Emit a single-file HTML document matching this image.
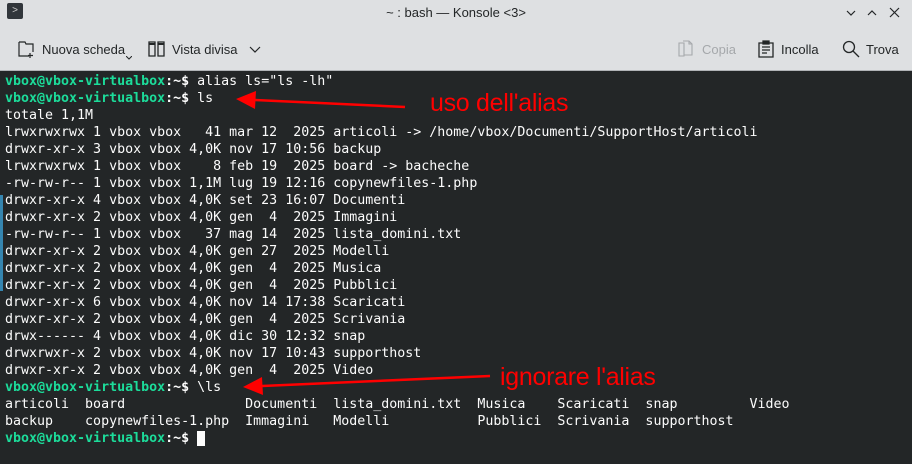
<!DOCTYPE html>
<html><head><meta charset="utf-8"><style>
*{margin:0;padding:0;box-sizing:border-box}
body{width:912px;height:464px;overflow:hidden;background:#232627;font-family:"Liberation Sans",sans-serif}
#title{position:absolute;left:0;top:0;width:912px;height:26px;background:#dee0e2;font-size:13px;color:#232627}
#tool{position:absolute;left:0;top:26px;width:912px;height:45px;background:#dee0e2;border-bottom:1px solid #b0b3b6;font-size:13px;color:#232627}
.ti{position:absolute;top:16px}
#term{position:absolute;left:0;top:72px;width:912px;height:392px;background:#232627}
pre{position:absolute;left:5px;top:1px;font-family:"DejaVu Sans Mono",monospace;font-size:13.3px;line-height:17px;color:#fcfcfc}
.g{color:#1cdc9a;font-weight:bold}
.b{color:#fcfcfc;font-weight:bold}
.ann{position:absolute;color:#f00;font-size:25px;font-family:"Liberation Sans",sans-serif;letter-spacing:-0.3px}
</style></head><body>
<div id="title">
<div style="position:absolute;left:7px;top:3px;width:16px;height:16px;background:#31363b;border-radius:2px;color:#ccc;font-size:10px;line-height:16px;text-align:center">&gt;</div>
<div style="position:absolute;left:0;width:912px;top:5px;text-align:center">~ : bash — Konsole &lt;3&gt;</div>
<svg style="position:absolute;left:840px;top:5px" width="70" height="16" fill="none" stroke="#232627" stroke-width="1.2"><path d="M7 6l4 4 4-4M28 10l4-4 4 4M50 3l9 9M59 3l-9 9"/></svg>
</div>
<div id="tool">
<svg style="position:absolute;left:18px;top:14px" width="18" height="18" fill="none" stroke="#232627" stroke-width="1.2"><path d="M1 2h6l1 2h7v8M1 2v14h10M12 13v5M10 15.5h5"/></svg>
<span class="ti" style="left:42px">Nuova scheda</span>
<svg style="position:absolute;left:126px;top:30px" width="6" height="4" fill="none" stroke="#232627"><path d="M0 0l3 3 3-3"/></svg>
<svg style="position:absolute;left:148px;top:15px" width="18" height="16" fill="none" stroke="#232627" stroke-width="1.3"><path d="M1 1h6v14H1zM10 1h6v14h-6z"/><path d="M1 3h6M10 3h6" stroke-width="2"/></svg>
<span class="ti" style="left:172px">Vista divisa</span>
<svg style="position:absolute;left:249px;top:20px" width="12" height="8" fill="none" stroke="#232627" stroke-width="1.2"><path d="M1 1l5 5 5-5"/></svg>
<svg style="position:absolute;left:678px;top:14px" width="16" height="18" fill="none" stroke="#a5a8ab" stroke-width="1.1"><path d="M1 3h5v13H1zM5 1h6l3 3v11H6M11 1v3h3"/></svg>
<span class="ti" style="left:702px;color:#a5a8ab">Copia</span>
<svg style="position:absolute;left:758px;top:14px" width="16" height="18" fill="none" stroke="#232627" stroke-width="1.3"><path d="M1 3h14v14H1z M4 7h8M4 10h8M4 13h5"/><path d="M5 1h6v3H5z" fill="#232627"/></svg>
<span class="ti" style="left:781px">Incolla</span>
<svg style="position:absolute;left:842px;top:14px" width="18" height="18" fill="none" stroke="#232627" stroke-width="1.3"><circle cx="7" cy="7" r="5.5"/><path d="M11 11l6 6"/></svg>
<span class="ti" style="left:866px">Trova</span>
</div>
<div id="term">
<div style="position:absolute;left:0;top:123px;width:3px;height:96px;background:#3daee9;opacity:.7"></div>
<pre><span class="g">vbox@vbox-virtualbox</span><span class="b">:~$</span> alias ls="ls -lh"
<span class="g">vbox@vbox-virtualbox</span><span class="b">:~$</span> ls
totale 1,1M
lrwxrwxrwx 1 vbox vbox   41 mar 12  2025 articoli -> /home/vbox/Documenti/SupportHost/articoli
drwxr-xr-x 3 vbox vbox 4,0K nov 17 10:56 backup
lrwxrwxrwx 1 vbox vbox    8 feb 19  2025 board -> bacheche
-rw-rw-r-- 1 vbox vbox 1,1M lug 19 12:16 copynewfiles-1.php
drwxr-xr-x 4 vbox vbox 4,0K set 23 16:07 Documenti
drwxr-xr-x 2 vbox vbox 4,0K gen  4  2025 Immagini
-rw-rw-r-- 1 vbox vbox   37 mag 14  2025 lista_domini.txt
drwxr-xr-x 2 vbox vbox 4,0K gen 27  2025 Modelli
drwxr-xr-x 2 vbox vbox 4,0K gen  4  2025 Musica
drwxr-xr-x 2 vbox vbox 4,0K gen  4  2025 Pubblici
drwxr-xr-x 6 vbox vbox 4,0K nov 14 17:38 Scaricati
drwxr-xr-x 2 vbox vbox 4,0K gen  4  2025 Scrivania
drwx------ 4 vbox vbox 4,0K dic 30 12:32 snap
drwxrwxr-x 2 vbox vbox 4,0K nov 17 10:43 supporthost
drwxr-xr-x 2 vbox vbox 4,0K gen  4  2025 Video
<span class="g">vbox@vbox-virtualbox</span><span class="b">:~$</span> \ls
articoli  board               Documenti  lista_domini.txt  Musica    Scaricati  snap         Video
backup    copynewfiles-1.php  Immagini   Modelli           Pubblici  Scrivania  supporthost
<span class="g">vbox@vbox-virtualbox</span><span class="b">:~$</span> <span style="background:#fcfcfc">&nbsp;</span></pre>
<svg style="position:absolute;left:0;top:0" width="912" height="392"><g fill="#f00" stroke="#f00" stroke-width="2.5"><path d="M405 35L255 28" fill="none"/><path d="M236 27l20-8-1 18z" stroke="none"/><path d="M490 304L262 314" fill="none"/><path d="M243 315l19-10 1 18z" stroke="none"/></g></svg>
<div class="ann" style="left:430px;top:17px">uso dell'alias</div>
<div class="ann" style="left:500px;top:291px">ignorare l'alias</div>
</div>
</body></html>
